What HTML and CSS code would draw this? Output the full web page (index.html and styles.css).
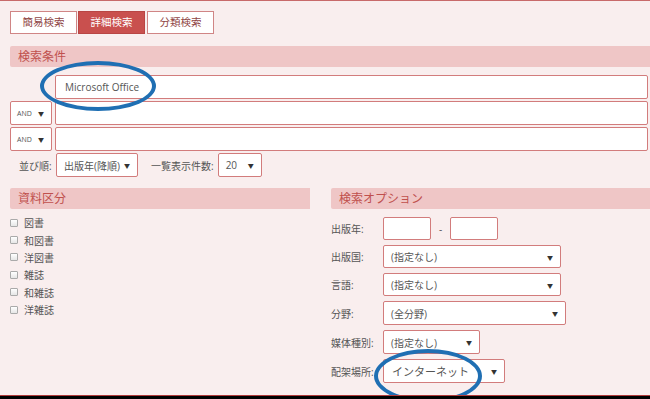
FILE: index.html
```html
<!DOCTYPE html>
<html lang="ja">
<head>
    <meta charset="UTF-8">
    <title>詳細検索</title>
    <link rel="stylesheet" href="styles.css">
</head>
<body>
    <div class="page">
        <div class="tabs">
            <a class="tab">簡易検索</a>
            <a class="tab active">詳細検索</a>
            <a class="tab">分類検索</a>
        </div>

        <div class="conditions">
            <h2 class="section-title">検索条件</h2>
            <div class="cond-row">
                <input type="text" class="text-input" value="Microsoft Office">
                <span class="mark mark-keyword"></span>
            </div>
            <div class="cond-row">
                <div class="select small"><span>AND</span></div>
                <input type="text" class="text-input">
            </div>
            <div class="cond-row">
                <div class="select small"><span>AND</span></div>
                <input type="text" class="text-input">
            </div>
            <div class="sort-row">
                <span class="label">並び順:</span>
                <div class="select sort"><span>出版年(降順)</span></div>
                <span class="label count-label">一覧表示件数:</span>
                <div class="select count"><span>20</span></div>
            </div>
        </div>

        <div class="columns">
            <div class="col-left">
                <h2 class="section-title">資料区分</h2>
                <ul class="check-list">
                    <li><span class="box"></span>図書</li>
                    <li><span class="box"></span>和図書</li>
                    <li><span class="box"></span>洋図書</li>
                    <li><span class="box"></span>雑誌</li>
                    <li><span class="box"></span>和雑誌</li>
                    <li><span class="box"></span>洋雑誌</li>
                </ul>
            </div>
            <div class="col-right">
                <h2 class="section-title">検索オプション</h2>
                <div class="options">
                    <span class="label">出版年:</span>
                    <div class="year-range">
                        <input type="text" class="year">
                        <span class="dash">-</span>
                        <input type="text" class="year">
                    </div>
                    <span class="label">出版国:</span>
                    <div class="select wide"><span>(指定なし)</span></div>
                    <span class="label">言語:</span>
                    <div class="select wide"><span>(指定なし)</span></div>
                    <span class="label">分野:</span>
                    <div class="select wider"><span>(全分野)</span></div>
                    <span class="label">媒体種別:</span>
                    <div class="select media"><span>(指定なし)</span></div>
                    <span class="label">配架場所:</span>
                    <div class="select place"><span class="big">インターネット</span><span class="mark mark-place"></span></div>
                </div>
            </div>
        </div>
    </div>
</body>
</html>
```

FILE: styles.css
```css
body {
    margin: 0;
    background-color: #000;
    font-family: "Open Sans", "Noto Sans CJK JP", sans-serif;
    font-size: 10px;
    color: #555;
}
.page {
    position: relative;
    height: 394px;
    overflow: hidden;
    background-color: #f9eeee;
    border-top: 1px solid #c86a6a;
    border-bottom: 1px solid #b03a3a;
}
.tabs {
    display: flex;
    gap: 1px;
    padding: 10px 0 0 10px;
}
.tab {
    box-sizing: border-box;
    width: 67px;
    height: 23px;
    line-height: 21px;
    text-align: center;
    background-color: #fff;
    border: 1px solid #d08585;
    color: #8f4545;
    font-size: 10.5px;
}
.tab.active {
    background-color: #c9504e;
    border-color: #b84644;
    color: #fff;
}
.tab + .tab.active + .tab {
    margin-left: 1px;
}
.section-title {
    margin: 0;
    height: 21px;
    line-height: 21px;
    padding-left: 8px;
    background-color: #efc6c6;
    border-radius: 2px 0 0 2px;
    color: #c0504d;
    font-size: 12px;
    font-weight: normal;
}
.conditions {
    margin: 12px 0 0 10px;
}
.cond-row {
    position: relative;
    display: flex;
    gap: 3px;
    margin-top: 2px;
    padding-right: 2px;
}
.conditions .section-title + .cond-row {
    margin-top: 8px;
    padding-left: 45px;
}
.text-input {
    box-sizing: border-box;
    flex: 1;
    height: 24px;
    margin: 0;
    padding: 0 9px;
    border: 1px solid #d27c7c;
    border-radius: 2px;
    background-color: #fff;
    font-family: "Open Sans", sans-serif;
    font-size: 10px;
    color: #555;
    outline: none;
}
.select {
    position: relative;
    box-sizing: border-box;
    display: flex;
    align-items: center;
    height: 24px;
    padding: 0 18px 0 7px;
    border: 1px solid #d27c7c;
    border-radius: 2px;
    background-color: #fff;
    color: #555;
    font-size: 10px;
    white-space: nowrap;
}
.select::after {
    content: "▼";
    position: absolute;
    right: 7px;
    top: 50%;
    transform: translateY(-50%);
    font-size: 6px;
    color: #333;
}
.select.small {
    width: 42px;
    padding-left: 6px;
    font-size: 7px;
}
.sort-row {
    display: flex;
    align-items: center;
    margin-top: 2px;
    height: 24px;
}
.label {
    color: #555;
    font-size: 10px;
    white-space: nowrap;
}
.sort-row .label:first-child {
    margin-left: 9px;
    width: 37px;
}
.select.sort {
    width: 82px;
    padding-right: 12px;
}
.count-label {
    margin: 0 4px 0 13px;
}
.select.count {
    width: 44px;
}
.columns {
    display: flex;
    margin-top: 11px;
    padding-left: 10px;
}
.col-left {
    width: 300px;
}
.col-right {
    flex: 1;
    margin-left: 21px;
}
.check-list {
    list-style: none;
    margin: 5px 0 0;
    padding: 0;
}
.check-list li {
    display: flex;
    align-items: center;
    height: 17.4px;
    font-size: 10px;
}
.box {
    box-sizing: border-box;
    width: 8px;
    height: 8px;
    margin-right: 6px;
    border: 1px solid #aaa;
    border-radius: 1px;
    background: linear-gradient(#fff, #e6e6e6);
}
.options {
    display: grid;
    grid-template-columns: 52px auto;
    justify-content: start;
    align-items: center;
    row-gap: 5px;
    margin-top: 8px;
}
.year-range {
    display: flex;
    align-items: center;
}
.year {
    box-sizing: border-box;
    width: 48px;
    height: 23px;
    margin: 0;
    border: 1px solid #d27c7c;
    border-radius: 2px;
    background-color: #fff;
    outline: none;
}
.dash {
    width: 19px;
    text-align: center;
}
.select.wide {
    width: 178px;
    height: 23px;
}
.select.wider {
    width: 183px;
}
.select.media {
    width: 97px;
}
.select.place {
    width: 122px;
}
.big {
    font-size: 11px;
    margin-left: 1px;
}
.mark {
    position: absolute;
    z-index: 5;
    box-sizing: border-box;
    border: 4px solid #1f6fb3;
    border-radius: 50%;
    pointer-events: none;
}
.mark-keyword {
    left: 30px;
    top: -14px;
    width: 116px;
    height: 50px;
}
.mark-place {
    left: -10px;
    top: -11px;
    width: 108px;
    height: 54px;
}
```
